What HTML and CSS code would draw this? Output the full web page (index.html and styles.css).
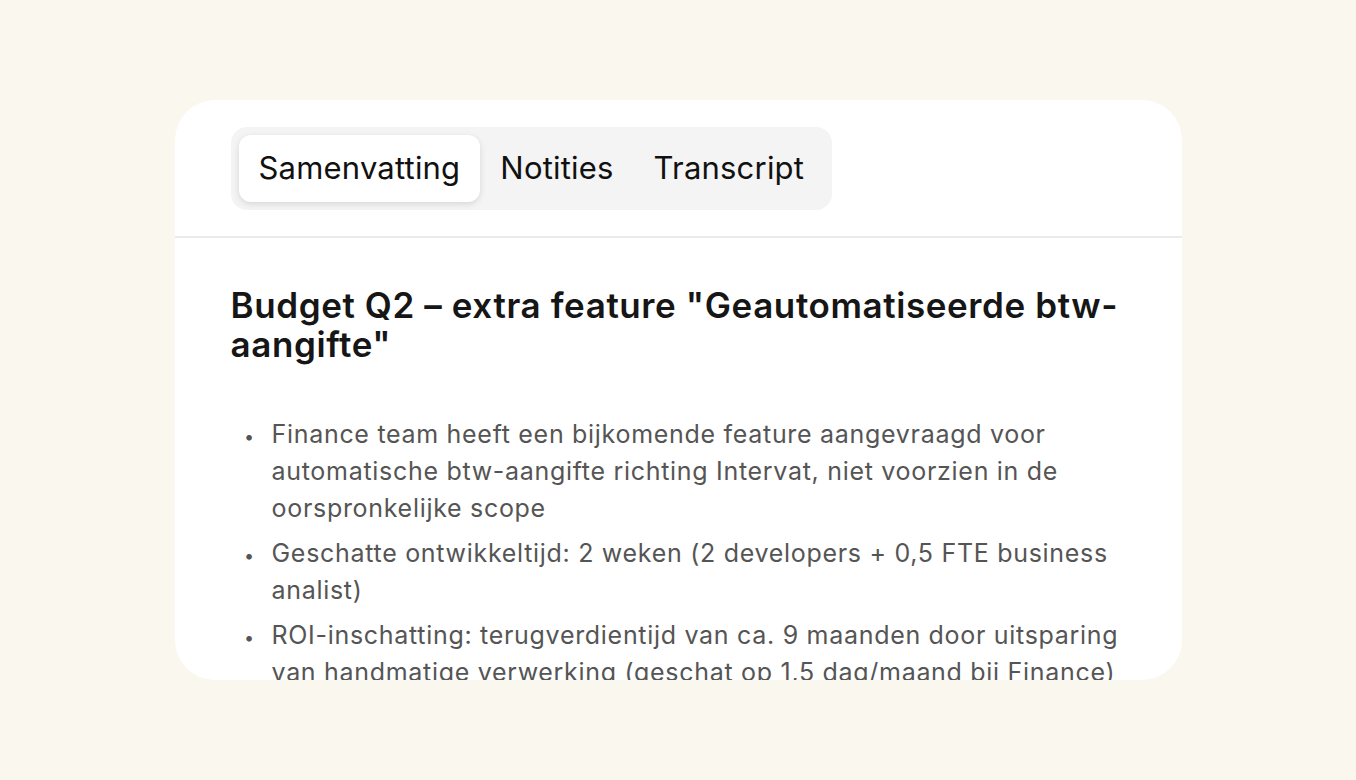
FILE: index.html
```html
<!DOCTYPE html>
<html>
  <head>
    <meta charset="utf-8">
    <title>Samenvatting</title>
    <link rel="stylesheet" href="styles.css">
  </head>
  <body>
    <div class="card">
      <div class="card_head">
        <div class="tabs">
          <div class="tab tab_active">Samenvatting</div>
          <div class="tab">Notities</div>
          <div class="tab">Transcript</div>
        </div>
      </div>

      <div class="card_body">
        <h2 class="title">Budget Q2 – extra feature "Geautomatiseerde btw-aangifte"</h2>
        <ul class="points">
          <li>Finance team heeft een bijkomende feature aangevraagd voor automatische btw-aangifte richting Intervat, niet voorzien in de oorspronkelijke scope</li>
          <li>Geschatte ontwikkeltijd: 2 weken (2 developers + 0,5 FTE business analist)</li>
          <li>ROI-inschatting: terugverdientijd van ca. 9 maanden door uitsparing van handmatige verwerking (geschat op 1,5 dag/maand bij Finance)</li>
        </ul>
      </div>
    </div>
  </body>
</html>
```

FILE: styles.css
```css
html, body{
  margin: 0;
  height: 100%;
}
body{
  background: #faf7ee;
  font-family: Inter, "Noto Sans", sans-serif;
  display: flex;
  align-items: center;
  justify-content: center;
}
.card{
  width: 1007px;
  height: 580px;
  background: #fff;
  border-radius: 40px;
  overflow: hidden;
}
.card_head{
  padding: 27px 56px 26px;
  border-bottom: 2px solid #ebebeb;
}
.tabs{
  display: inline-flex;
  padding: 8px;
  background: #f4f4f4;
  border-radius: 16px;
}
.tab{
  padding: 0 20px;
  height: 67px;
  line-height: 66px;
  font-size: 31px;
  letter-spacing: 0.2px;
  color: #111;
  border-radius: 12px;
}
.tab_active{
  background: #fff;
  box-shadow: 0 2px 6px rgba(0,0,0,0.12);
}
.card_body{
  padding: 48px 56px 0;
}
.title{
  margin: 0;
  font-size: 35px;
  line-height: 39px;
  letter-spacing: 0.6px;
  font-weight: 600;
  color: #161616;
}
.points{
  margin: 52px 0 0;
  padding-left: 41px;
  color: #555;
  font-size: 25px;
  line-height: 37px;
  letter-spacing: 0.7px;
}
.points li{
  margin-bottom: 8px;
}
.points li::marker{
  content: "•\00a0\00a0\00a0";
  font-size: 18px;
}
```
